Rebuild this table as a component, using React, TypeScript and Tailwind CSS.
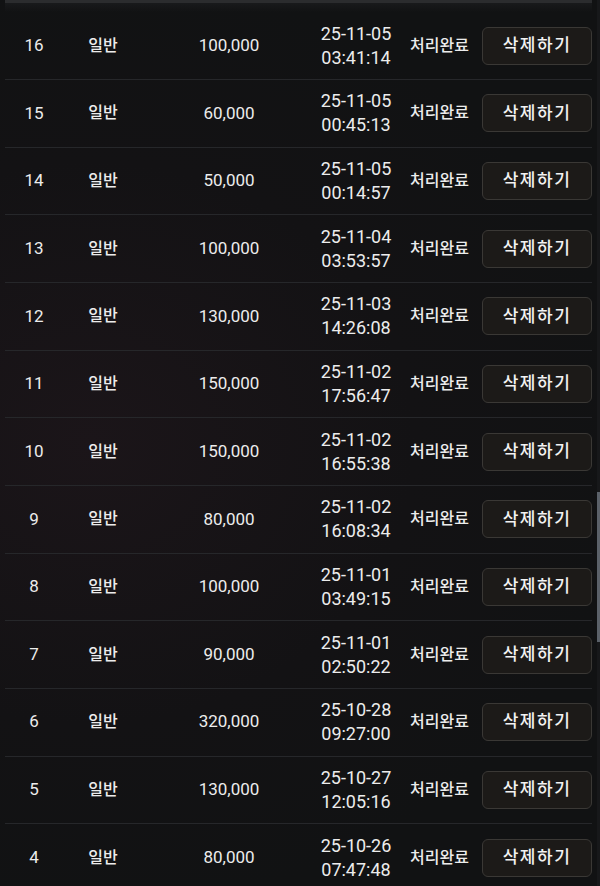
const rows = [
  { no: 16, amount: '100,000', date: '25-11-05', time: '03:41:14' },
  { no: 15, amount: '60,000', date: '25-11-05', time: '00:45:13' },
  { no: 14, amount: '50,000', date: '25-11-05', time: '00:14:57' },
  { no: 13, amount: '100,000', date: '25-11-04', time: '03:53:57' },
  { no: 12, amount: '130,000', date: '25-11-03', time: '14:26:08' },
  { no: 11, amount: '150,000', date: '25-11-02', time: '17:56:47' },
  { no: 10, amount: '150,000', date: '25-11-02', time: '16:55:38' },
  { no: 9, amount: '80,000', date: '25-11-02', time: '16:08:34' },
  { no: 8, amount: '100,000', date: '25-11-01', time: '03:49:15' },
  { no: 7, amount: '90,000', date: '25-11-01', time: '02:50:22' },
  { no: 6, amount: '320,000', date: '25-10-28', time: '09:27:00' },
  { no: 5, amount: '130,000', date: '25-10-27', time: '12:05:16' },
  { no: 4, amount: '80,000', date: '25-10-26', time: '07:47:48' },
];

function Row({ no, amount, date, time }: (typeof rows)[number]) {
  return (
    <div className="grid h-[67.67px] shrink-0 grid-cols-[58px_80px_172px_82px_85px_110px] items-center border-b border-[#26272a] text-[#ececec]">
      <div className="text-center text-[17px]">{no}</div>
      <div className="text-center text-[16px] font-medium">일반</div>
      <div className="text-center text-[17px]">{amount}</div>
      <div className="flex flex-col items-center text-[18px] leading-[24px]">
        <span>{date}</span>
        <span>{time}</span>
      </div>
      <div className="text-center text-[16px] font-medium">처리완료</div>
      <button className="flex h-[38px] w-[110px] items-center justify-center rounded-[6px] border border-[#3a3835] bg-[#1c1a18] text-[17px] font-medium tracking-[1.5px] text-[#f2f2f2]">
        삭제하기
      </button>
    </div>
  );
}

export default function App() {
  return (
    <div
      className="relative h-[886px] w-[600px] overflow-hidden bg-[radial-gradient(ellipse_at_15%_50%,#1b1519_0%,#131214_45%,#111213_75%)]"
      style={{ fontFamily: "Roboto, 'Noto Sans CJK KR', sans-serif" }}
    >
      <div className="flex h-full flex-col pl-[5px] pr-[8px]">
        <div className="h-[12.33px] shrink-0 bg-gradient-to-b from-[#1b1c1e] to-transparent">
          <div className="h-[3px] bg-[#2b2c2e]" />
        </div>
        {rows.map((r) => (
          <Row key={r.no} {...r} />
        ))}
      </div>
      {/* scrollbar */}
      <div className="absolute right-0 top-0 h-full w-[3px] bg-[#17181a]">
        <div className="mt-[492px] h-[150px] w-full bg-[#5b6169]" />
      </div>
    </div>
  );
}
